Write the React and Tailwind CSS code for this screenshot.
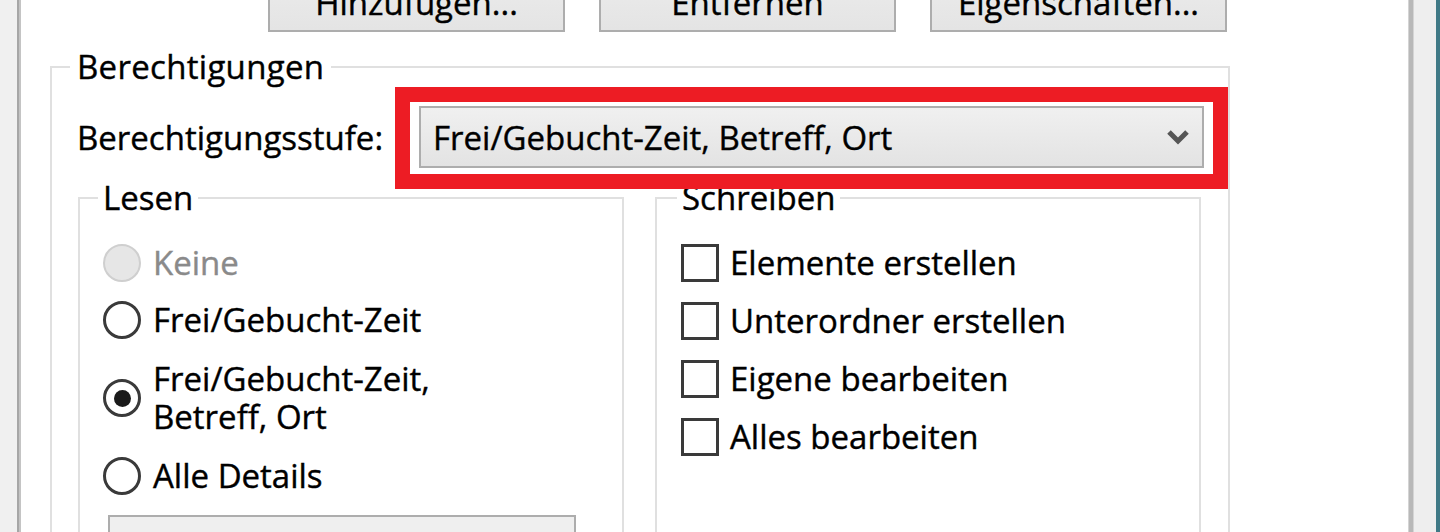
import React from "react";

function Radio({ state }) {
  if (state === "disabled") {
    return <div className="w-[38px] h-[38px] shrink-0 rounded-full border-2 border-[#cfcfcf] bg-[#e6e6e6]" />;
  }
  return (
    <div className="w-[38px] h-[38px] shrink-0 rounded-full border-[3px] border-[#3a3a3a] bg-white flex items-center justify-center">
      {state === "checked" && <div className="w-[17px] h-[17px] rounded-full bg-[#1a1a1a]" />}
    </div>
  );
}

function Check() {
  return <div className="w-[38px] h-[38px] shrink-0 border-[3px] border-[#3a3a3a] bg-white" />;
}

export default function App() {
  return (
    <div className="w-[1440px] h-[532px] overflow-hidden flex bg-white text-black font-['Open_Sans',sans-serif] text-[33px] [-webkit-text-stroke:0.4px_currentColor]">
      {/* left chrome */}
      <div className="w-[17px] shrink-0 bg-[#f0f0f0]" />
      <div className="w-[4px] shrink-0 bg-[#c4c4c4] border-l-2 border-[#a6a6a6]" />

      {/* main content */}
      <div className="w-[1387px] shrink-0 flex flex-col bg-white">
        {/* buttons row (cut at top) */}
        <div className="flex gap-[34px] ml-[247px] mt-[-28px]">
          {["Hinzufügen...", "Entfernen", "Eigenschaften..."].map((t) => (
            <div
              key={t}
              className="w-[297px] h-[60px] border-2 border-[#adadad] bg-gradient-to-b from-[#ececec] to-[#e4e4e4] flex items-center justify-center leading-none"
            >
              {t}
            </div>
          ))}
        </div>

        {/* Berechtigungen group */}
        <fieldset className="ml-[29px] mt-[15px] w-[1178px] h-[600px] border-2 border-[#e0e0e0] shrink-0">
          <legend className="ml-[18px] px-[7px] leading-[40px] tracking-[0.3px]">Berechtigungen</legend>

          <div className="flex items-start">
            <div className="ml-[25px] w-[318px] h-[102px] flex items-center whitespace-nowrap">
              Berechtigungsstufe:
            </div>
            <div className="relative z-10 w-[833px] h-[102px] border-[15px] border-[#ed1c24] bg-white pl-[9px] pr-[9px] pt-[4px] shrink-0">
              <div className="h-[62px] border-2 border-[#adadad] bg-gradient-to-b from-[#f0f0f0] to-[#e3e3e3] flex items-center justify-between pl-[12px] pr-[12px] leading-none">
                <span className="whitespace-nowrap">Frei/Gebucht-Zeit, Betreff, Ort</span>
                <svg width="24" height="18" viewBox="0 0 24 18">
                  <polyline points="3,4 12,13 21,4" fill="none" stroke="#565656" strokeWidth="5" />
                </svg>
              </div>
            </div>
          </div>

          <div className="flex">
            {/* Lesen */}
            <fieldset className="ml-[26px] w-[546px] h-[400px] border-2 border-[#e0e0e0] shrink-0">
              <legend className="ml-[18px] px-[5px] leading-[18px]">Lesen</legend>
              <div className="flex flex-col pl-[23px]">
                <div className="flex items-center gap-[12px] mt-[37px] leading-[38px]">
                  <Radio state="disabled" />
                  <span className="text-[#8a8a8a]">Keine</span>
                </div>
                <div className="flex items-center gap-[12px] mt-[19px] leading-[38px]">
                  <Radio state="off" />
                  <span>Frei/Gebucht-Zeit</span>
                </div>
                <div className="flex items-center gap-[12px] mt-[21px] leading-[38px]">
                  <Radio state="checked" />
                  <span>
                    Frei/Gebucht-Zeit,
                    <br />
                    Betreff, Ort
                  </span>
                </div>
                <div className="flex items-center gap-[12px] mt-[21px] leading-[38px]">
                  <Radio state="off" />
                  <span>Alle Details</span>
                </div>
                <div className="ml-[5px] mt-[20px] w-[468px] h-[60px] border-2 border-[#adadad] bg-[#efefef]" />
              </div>
            </fieldset>

            {/* Schreiben */}
            <fieldset className="ml-[31px] w-[546px] h-[400px] border-2 border-[#e0e0e0] shrink-0">
              <legend className="ml-[20px] px-[5px] leading-[18px]">Schreiben</legend>
              <div className="flex flex-col pl-[24px] gap-[20px] pt-[37px]">
                {["Elemente erstellen", "Unterordner erstellen", "Eigene bearbeiten", "Alles bearbeiten"].map((t) => (
                  <div key={t} className="flex items-center gap-[11px] leading-[38px]">
                    <Check />
                    <span className="whitespace-nowrap">{t}</span>
                  </div>
                ))}
              </div>
            </fieldset>
          </div>
        </fieldset>
      </div>

      {/* right chrome */}
      <div className="w-[6px] shrink-0 bg-[#b8b8b8] border-x border-[#d4d4d4]" />
      <div className="w-[22px] shrink-0 bg-[#eeeeee]" />
      <div className="w-[4px] shrink-0 bg-[#3f7986]" />
    </div>
  );
}
